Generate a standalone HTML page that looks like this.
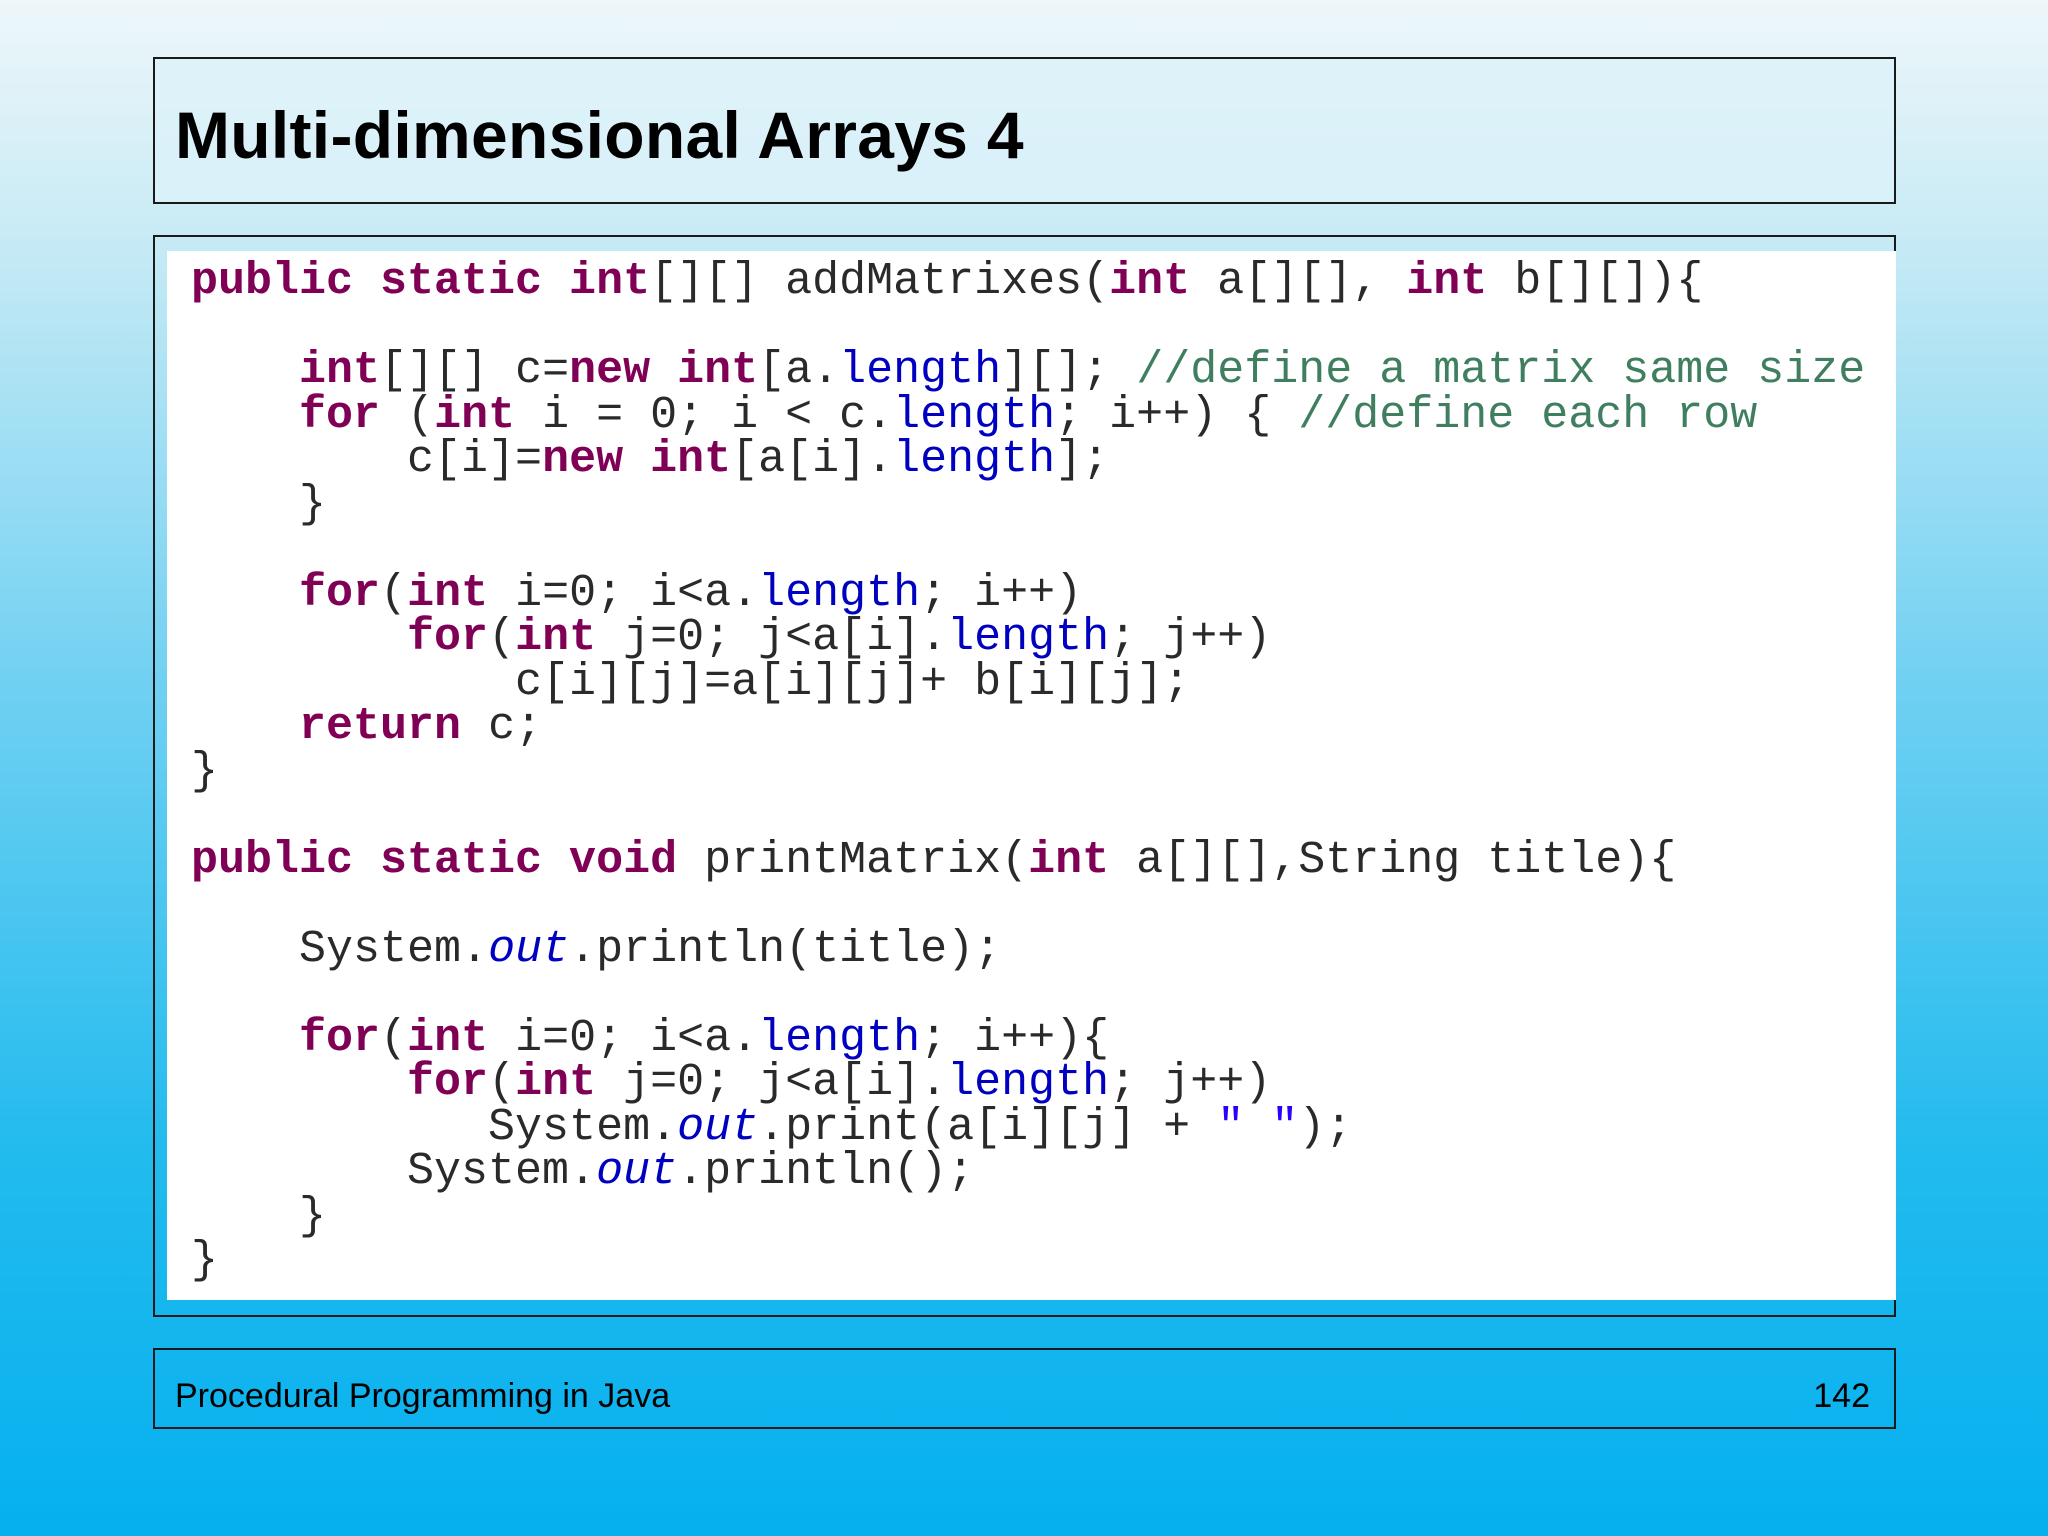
<!DOCTYPE html>
<html><head><meta charset="utf-8"><style>
html,body{margin:0;padding:0}
body{width:2048px;height:1536px;position:relative;overflow:hidden;
background:linear-gradient(to bottom,#eef7fa 0%,#c9ebf5 15%,#6fd0f2 45%,#22bbee 75%,#05b0ef 100%);
font-family:"Liberation Sans",sans-serif}
.box{position:absolute;left:153px;width:1743px;border:2px solid #1a1a1a;box-sizing:border-box}
#t{top:57px;height:147px;background:rgba(220,242,250,0.75)}
#t span{position:absolute;left:20px;top:38px;font-size:66px;font-weight:bold;color:#000;letter-spacing:0.3px}
#c{top:235px;height:1082px}
#w{position:absolute;left:167px;top:251px;width:1729px;height:1049px;background:#fff}
pre{position:absolute;left:191px;top:260px;margin:0;font-family:"Liberation Mono",monospace;font-size:45px;line-height:44.5px;color:#2a2a2a;white-space:pre}
.k{color:#7f0055;font-weight:bold}.f{color:#0000c0}.m{color:#3f7f5f}.s{color:#2a00ff}.i{color:#0000c0;font-style:italic}
#ft{top:1348px;height:81px}
#ft .l{position:absolute;left:20px;top:27px;font-size:34px}
#ft .r{position:absolute;right:24px;top:27px;font-size:34px}
</style></head><body>
<div class="box" id="t"><span>Multi-dimensional Arrays 4</span></div>
<div class="box" id="c"></div>
<div id="w"></div>
<pre><span class="k">public static int</span>[][] addMatrixes(<span class="k">int</span> a[][], <span class="k">int</span> b[][]){

    <span class="k">int</span>[][] c=<span class="k">new int</span>[a.<span class="f">length</span>][]; <span class="m">//define a matrix same size</span>
    <span class="k">for</span> (<span class="k">int</span> i = 0; i &lt; c.<span class="f">length</span>; i++) { <span class="m">//define each row</span>
        c[i]=<span class="k">new int</span>[a[i].<span class="f">length</span>];
    }

    <span class="k">for</span>(<span class="k">int</span> i=0; i&lt;a.<span class="f">length</span>; i++)
        <span class="k">for</span>(<span class="k">int</span> j=0; j&lt;a[i].<span class="f">length</span>; j++)
            c[i][j]=a[i][j]+ b[i][j];
    <span class="k">return</span> c;
}

<span class="k">public static void</span> printMatrix(<span class="k">int</span> a[][],String title){

    System.<span class="i">out</span>.println(title);

    <span class="k">for</span>(<span class="k">int</span> i=0; i&lt;a.<span class="f">length</span>; i++){
        <span class="k">for</span>(<span class="k">int</span> j=0; j&lt;a[i].<span class="f">length</span>; j++)
           System.<span class="i">out</span>.print(a[i][j] + <span class="s">" "</span>);
        System.<span class="i">out</span>.println();
    }
}</pre>
<div class="box" id="ft"><span class="l">Procedural Programming in Java</span><span class="r">142</span></div>
</body></html>
